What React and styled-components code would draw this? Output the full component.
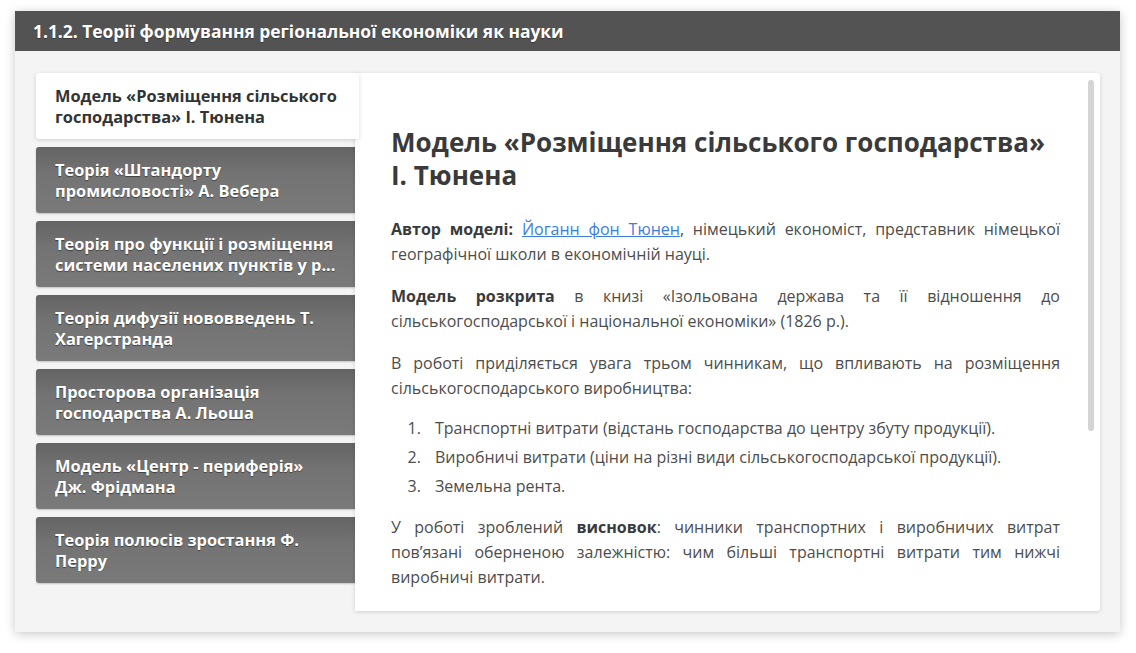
import styled, { createGlobalStyle } from 'styled-components';

const GlobalStyle = createGlobalStyle`
  html, body {
    margin: 0;
    padding: 0;
    background: #ffffff;
  }
  body {
    font-family: 'Open Sans', 'Noto Sans', sans-serif;
  }
`;

const tabs = [
  'Модель «Розміщення сільського господарства» І. Тюнена',
  'Теорія «Штандорту промисловості» А. Вебера',
  'Теорія про функції і розміщення системи населених пунктів у р...',
  'Теорія дифузії нововведень Т. Хагерстранда',
  'Просторова організація господарства А. Льоша',
  'Модель «Центр - периферія» Дж. Фрідмана',
  'Теорія полюсів зростання Ф. Перру',
];

const App = () => {
  return (<>
    <GlobalStyle/>
    <Page>
      <Card>
        <CardHeader>1.1.2. Теорії формування регіональної економіки як науки</CardHeader>
        <CardBody>
          <TabList>
            {tabs.map((t, i) => (
              <Tab key={t} $active={i === 0}>
                <TabText $active={i === 0}>{t}</TabText>
              </Tab>
            ))}
          </TabList>
          <Panel>
            <PanelInner>
              <Heading>Модель «Розміщення сільського господарства» І. Тюнена</Heading>
              <Paragraph>
                <b>Автор моделі:</b> <Link href='#'>Йоганн фон Тюнен</Link>, німецький економіст, представник німецької
                географічної школи в економічній науці.
              </Paragraph>
              <Paragraph>
                <b>Модель розкрита</b> в книзі «Ізольована держава та її відношення до
                сільськогосподарської і національної економіки» (1826 р.).
              </Paragraph>
              <Paragraph>
                В роботі приділяється увага трьом чинникам, що впливають на розміщення
                сільськогосподарського виробництва:
              </Paragraph>
              <List>
                <li>Транспортні витрати (відстань господарства до центру збуту продукції).</li>
                <li>Виробничі витрати (ціни на різні види сільськогосподарської продукції).</li>
                <li>Земельна рента.</li>
              </List>
              <Paragraph>
                У роботі зроблений <b>висновок</b>: чинники транспортних і виробничих витрат
                пов’язані оберненою залежністю: чим більші транспортні витрати тим нижчі
                виробничі витрати.
              </Paragraph>
            </PanelInner>
            <ScrollThumb/>
          </Panel>
        </CardBody>
      </Card>
    </Page>
  </>);
};

export default App;

const Page = styled.div`
  padding: 11px 16px 21px 15px;
`;

const Card = styled.div`
  background: #f4f4f4;
  box-shadow: 0 2px 10px rgba(0, 0, 0, 0.22);
  display: flex;
  flex-direction: column;
  height: 621px;
`;

const CardHeader = styled.div`
  align-items: center;
  background: #535353;
  color: #ffffff;
  display: flex;
  font-size: 17.4px;
  font-weight: 700;
  height: 40px;
  padding-left: 18px;
  text-shadow: 0 1px 1px rgba(0, 0, 0, 0.35);
`;

const CardBody = styled.div`
  display: flex;
  flex: 1;
  min-height: 0;
  padding: 22px 20px 21px 21px;
`;

const TabList = styled.div`
  display: flex;
  flex-direction: column;
  flex-shrink: 0;
  gap: 8px;
  width: 319px;
`;

const Tab = styled.div`
  background: ${({ $active }) => $active ? '#ffffff' : 'linear-gradient(180deg, #646464 0%, #737373 40%, #7a7a7a 100%)'};
  border-radius: 3px 0 0 3px;
  box-shadow: ${({ $active }) => $active ? '0 1px 4px rgba(0, 0, 0, 0.15)' : '0 1px 2px rgba(0, 0, 0, 0.2)'};
  box-sizing: border-box;
  height: 66px;
  margin-right: ${({ $active }) => $active ? '-4px' : '0'};
  padding: 12px ${({ $active }) => $active ? '22px' : '18px'} 12px 19px;
  position: relative;
  z-index: ${({ $active }) => $active ? 2 : 0};
`;

const TabText = styled.div`
  -webkit-box-orient: vertical;
  -webkit-line-clamp: 2;
  color: ${({ $active }) => $active ? '#333333' : '#ffffff'};
  display: -webkit-box;
  font-size: 16.4px;
  font-weight: 700;
  line-height: 21px;
  overflow: hidden;
  text-shadow: ${({ $active }) => $active ? 'none' : '0 1px 1px rgba(0, 0, 0, 0.45)'};
`;

const Panel = styled.div`
  background: #ffffff;
  border-radius: 0 3px 3px 0;
  box-shadow: 0 1px 4px rgba(0, 0, 0, 0.15);
  flex: 1;
  overflow: hidden;
  position: relative;
  z-index: 1;
`;

const ScrollThumb = styled.div`
  background: #d4d4d4;
  border-radius: 3px;
  height: 351px;
  position: absolute;
  right: 6px;
  top: 7px;
  width: 6px;
`;

const PanelInner = styled.div`
  padding: 36px 40px 0 36px;
`;

const Heading = styled.h2`
  color: #3a3a3a;
  font-size: 26px;
  font-weight: 700;
  line-height: 33px;
  margin: 17px 0 25px;
`;

const Paragraph = styled.p`
  color: #4d4d4d;
  font-size: 16px;
  line-height: 25px;
  margin: 0 0 17px;
  text-align: justify;

  b {
    color: #3a3a3a;
  }
`;

const Link = styled.a`
  color: #3b7ddd;
  text-decoration: underline;
`;

const List = styled.ol`
  color: #4d4d4d;
  font-size: 16px;
  line-height: 29px;
  margin: -4px 0 14px;
  padding-left: 34px;

  li {
    padding-left: 10px;
  }
`;
